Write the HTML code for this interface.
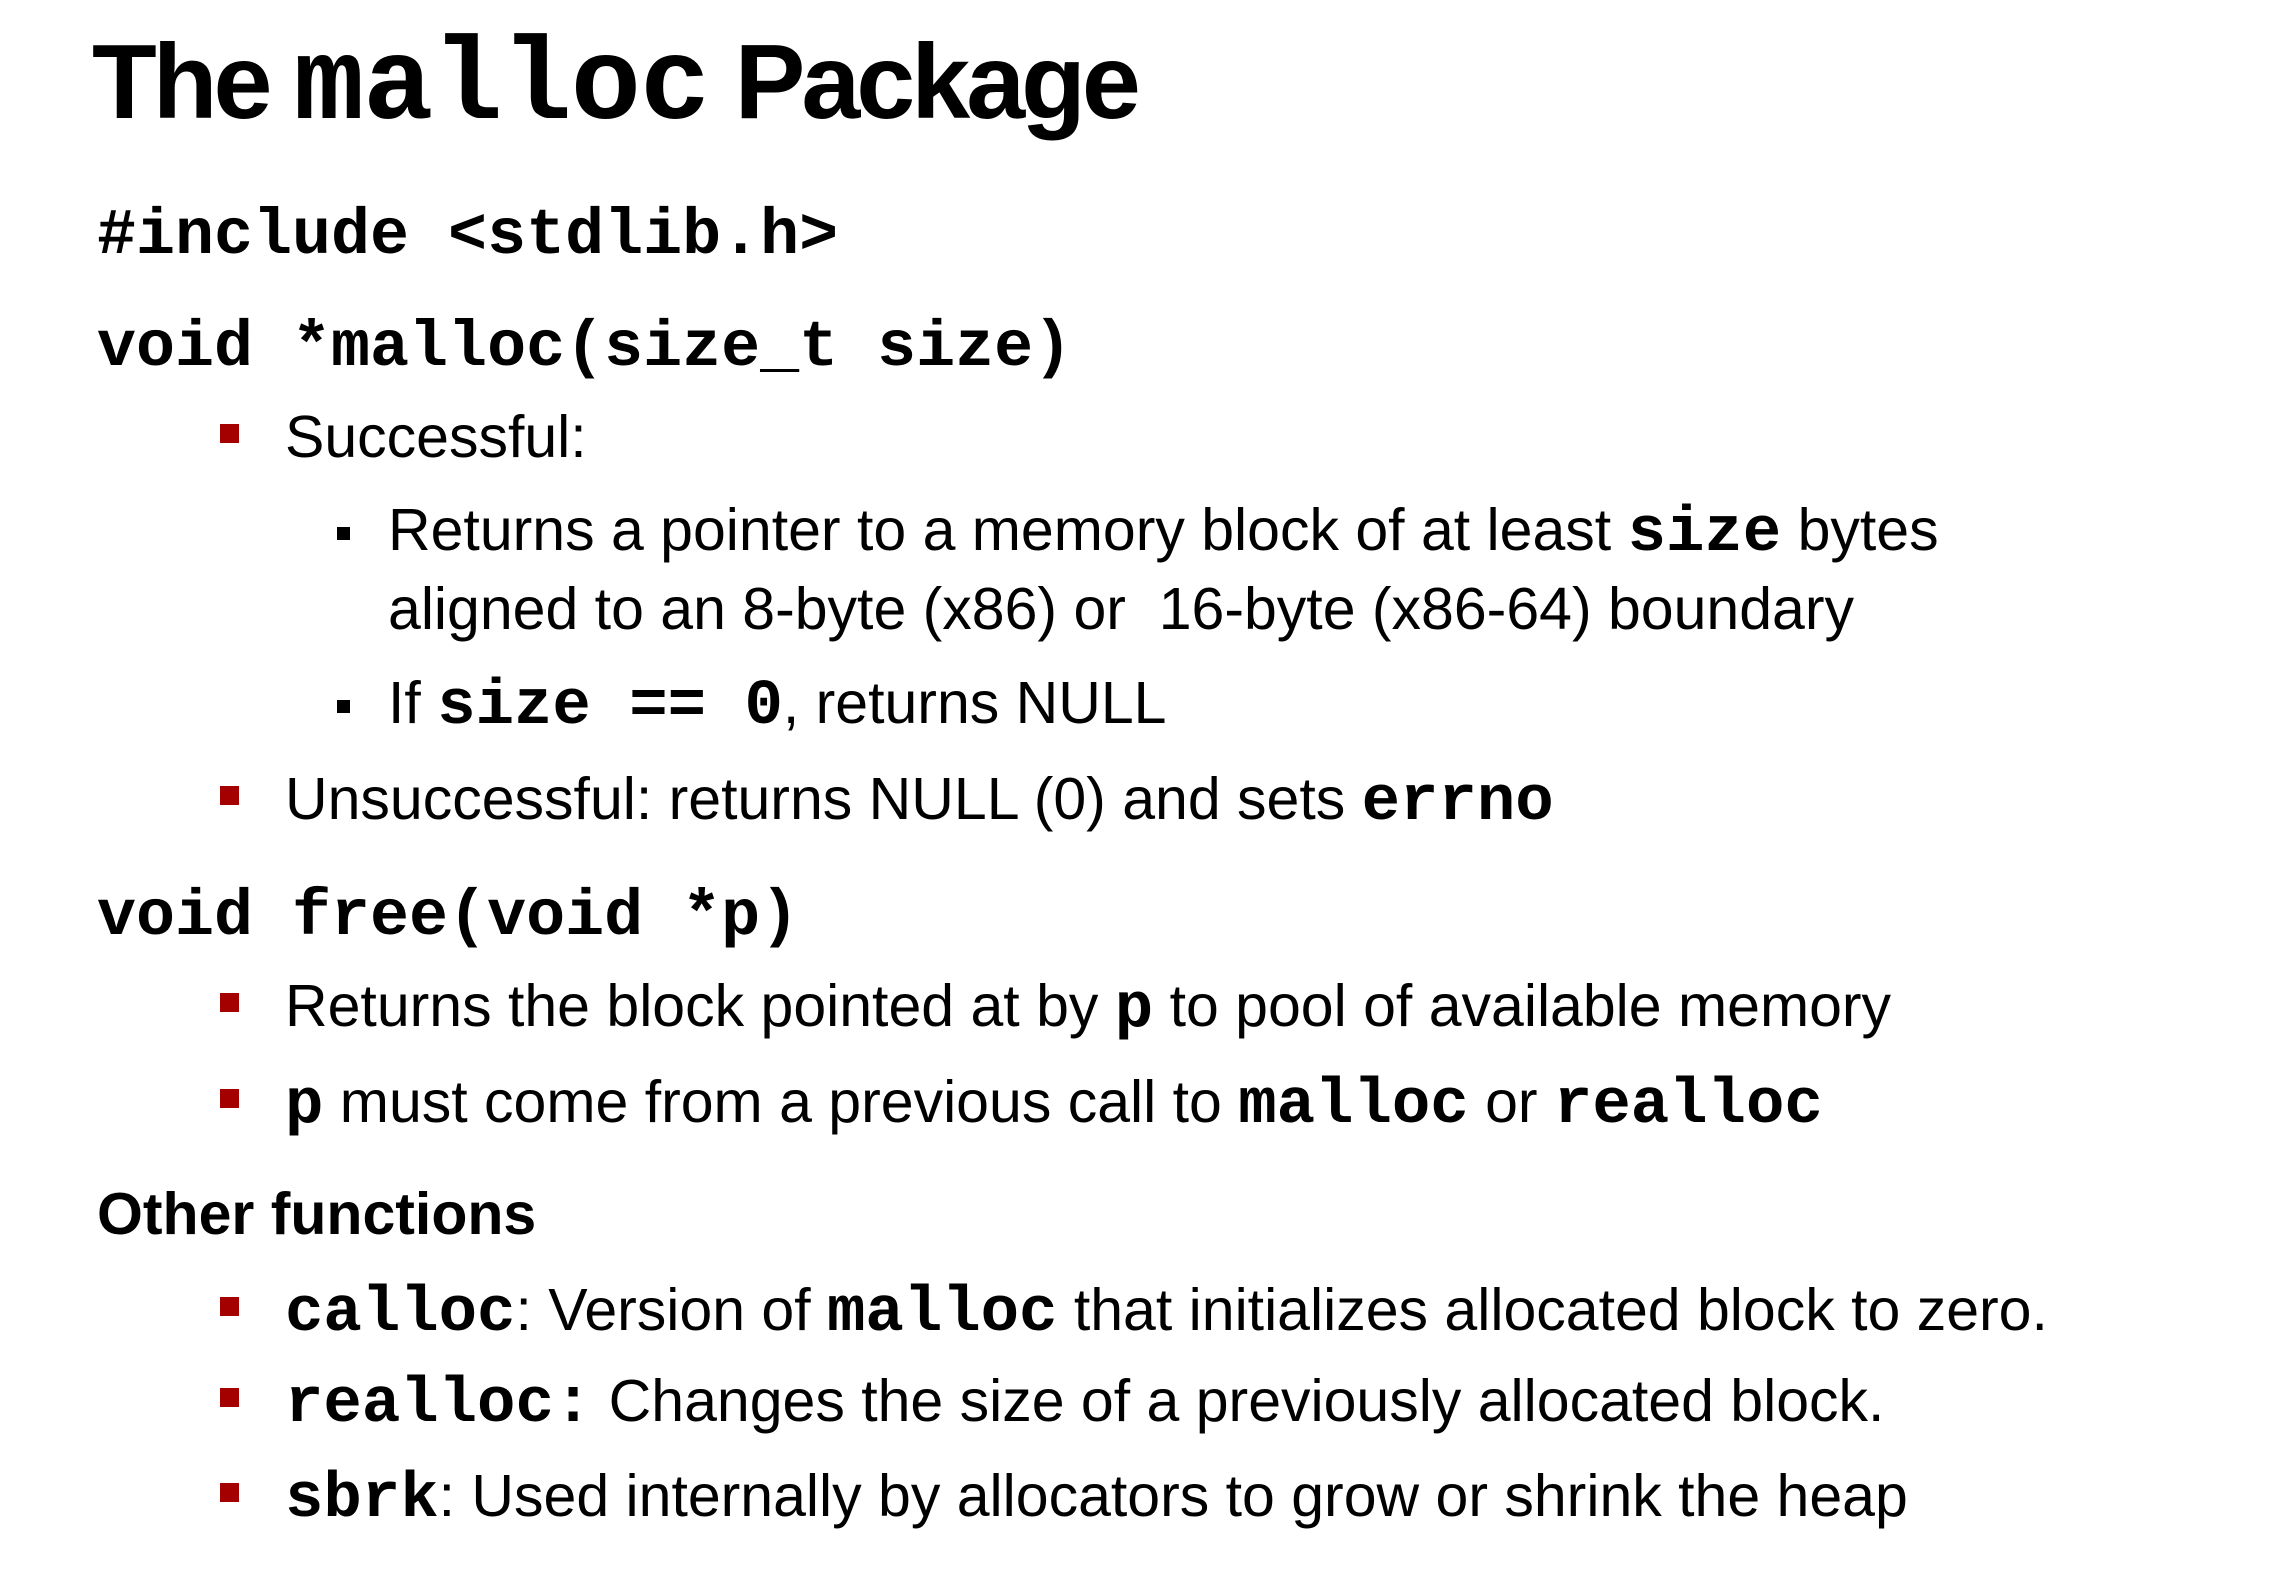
<!DOCTYPE html>
<html><head><meta charset="utf-8"><style>
html,body{margin:0;padding:0;background:#fff;}
body{width:2274px;height:1575px;position:relative;overflow:hidden;color:#000;font-family:"Liberation Sans",sans-serif;}
.l{position:absolute;white-space:nowrap;font-size:59px;line-height:normal;letter-spacing:0;}
.c{font-family:"Liberation Mono",monospace;font-weight:bold;font-size:64px;letter-spacing:0;}
.code{position:absolute;white-space:nowrap;font-family:"Liberation Mono",monospace;font-weight:bold;font-size:65px;line-height:normal;}
.b{position:absolute;width:19px;height:19px;background:#a50000;}
.s{position:absolute;width:13px;height:13px;background:#000;}
</style></head><body>
<div class="l" style="left:92px;top:22px;font-size:106px;font-weight:bold;letter-spacing:-4px;">The <span class="c" style="font-size:117px;letter-spacing:-1px;">malloc</span> Package</div>

<div class="code" style="left:97px;top:199px;">#include &lt;stdlib.h&gt;</div>
<div class="code" style="left:97px;top:311px;">void *malloc(size_t size)</div>

<div class="b" style="left:220px;top:424px;"></div>
<div class="l" style="left:285px;top:403px;">Successful:</div>

<div class="s" style="left:337px;top:527px;"></div>
<div class="l" style="left:388px;top:496px;">Returns a pointer to a memory block of at least <span class="c">size</span> bytes</div>
<div class="l" style="left:388px;top:575px;">aligned to an 8-byte (x86) or&nbsp; 16-byte (x86-64) boundary</div>
<div class="s" style="left:337px;top:700px;"></div>
<div class="l" style="left:388px;top:669px;">If <span class="c">size == 0</span>, returns NULL</div>

<div class="b" style="left:220px;top:786px;"></div>
<div class="l" style="left:285px;top:765px;">Unsuccessful: returns NULL (0) and sets <span class="c">errno</span></div>

<div class="code" style="left:97px;top:880px;">void free(void *p)</div>

<div class="b" style="left:220px;top:993px;"></div>
<div class="l" style="left:285px;top:972px;">Returns the block pointed at by <span class="c">p</span> to pool of available memory</div>
<div class="b" style="left:220px;top:1089px;"></div>
<div class="l" style="left:285px;top:1068px;"><span class="c">p</span> must come from a previous call to <span class="c">malloc</span> or <span class="c">realloc</span></div>

<div class="l" style="left:97px;top:1180px;font-weight:bold;">Other functions</div>

<div class="b" style="left:220px;top:1297px;"></div>
<div class="l" style="left:285px;top:1276px;"><span class="c">calloc</span>: Version of <span class="c">malloc</span> that initializes allocated block to zero.</div>
<div class="b" style="left:220px;top:1388px;"></div>
<div class="l" style="left:285px;top:1367px;"><span class="c">realloc:</span> Changes the size of a previously allocated block.</div>
<div class="b" style="left:220px;top:1483px;"></div>
<div class="l" style="left:285px;top:1462px;"><span class="c">sbrk</span>: Used internally by allocators to grow or shrink the heap</div>
</body></html>
